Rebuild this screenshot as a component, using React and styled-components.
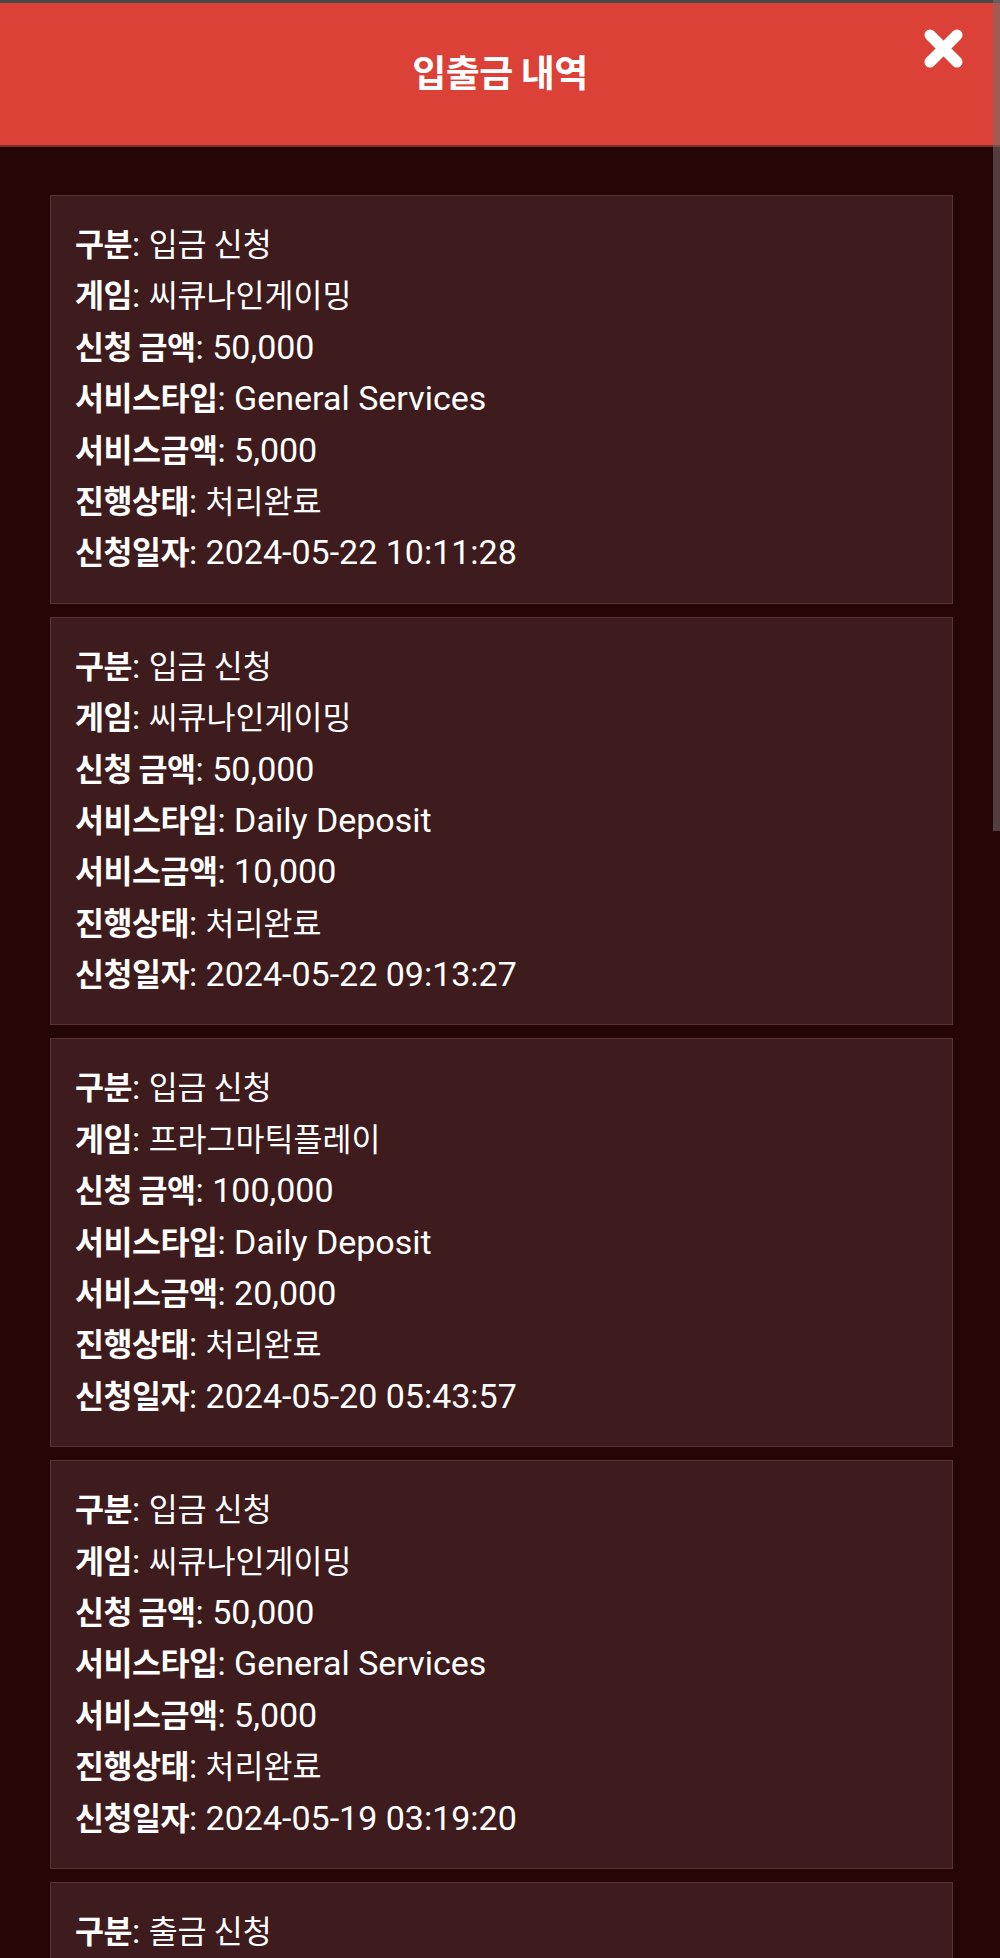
import styled, { createGlobalStyle } from 'styled-components';

const GlobalStyle = createGlobalStyle`
  html, body {
    margin: 0;
    padding: 0;
    background: #250605;
  }
  * {
    box-sizing: border-box;
  }
`;

const Page = styled.div`
  position: relative;
  height: 1958px;
  overflow: hidden;
  background: #250605;
  font-family: Roboto, "Noto Sans CJK KR", sans-serif;
  color: #ffffff;
`;

const Header = styled.header`
  position: relative;
  height: 147px;
  border-top: 3px solid #48474c;
  border-bottom: 2px solid #7a2c27;
  background: #db4136;
  display: flex;
  align-items: center;
  justify-content: center;
  padding-bottom: 6px;
`;

const Title = styled.h1`
  margin: 0;
  font-family: "Noto Sans CJK KR", sans-serif;
  font-size: 37px;
  font-weight: 700;
  letter-spacing: -0.5px;
`;

const CloseButton = styled.button`
  position: absolute;
  top: 25px;
  right: 36px;
  width: 41px;
  height: 41px;
  padding: 0;
  border: 0;
  background: none;
  cursor: pointer;
  display: flex;
`;

const Scrollbar = styled.div`
  position: absolute;
  top: 0;
  right: 0;
  width: 7px;
  height: 831px;
  background: rgba(120, 110, 110, 0.55);
`;

const List = styled.div`
  display: flex;
  flex-direction: column;
  gap: 13px;
  padding: 48px 47px 0 50px;
`;

const Card = styled.div`
  background: #3e1b1c;
  border: 1px solid #5b3233;
  padding: 21px 25px 26px 24px;
`;

const Row = styled.div`
  height: 51.4px;
  line-height: 51.4px;
  font-size: 34px;
  white-space: nowrap;
`;

const Label = styled.strong`
  font-family: "Noto Sans CJK KR", sans-serif;
  font-size: 31.5px;
  font-weight: 700;
  letter-spacing: -0.5px;
`;

const Value = styled.span`
  font-family: ${(p) => (p.$ko ? '"Noto Sans CJK KR", sans-serif' : 'Roboto, sans-serif')};
  font-size: ${(p) => (p.$ko ? '31.5px' : '34px')};
  font-weight: 400;
`;

const records = [
  { type: '입금 신청', game: '씨큐나인게이밍', amount: '50,000', service: 'General Services', bonus: '5,000', status: '처리완료', date: '2024-05-22 10:11:28' },
  { type: '입금 신청', game: '씨큐나인게이밍', amount: '50,000', service: 'Daily Deposit', bonus: '10,000', status: '처리완료', date: '2024-05-22 09:13:27' },
  { type: '입금 신청', game: '프라그마틱플레이', amount: '100,000', service: 'Daily Deposit', bonus: '20,000', status: '처리완료', date: '2024-05-20 05:43:57' },
  { type: '입금 신청', game: '씨큐나인게이밍', amount: '50,000', service: 'General Services', bonus: '5,000', status: '처리완료', date: '2024-05-19 03:19:20' },
  // rest of this one is below the fold
  { type: '출금 신청' },
];

const fields = [
  ['구분', 'type'],
  ['게임', 'game'],
  ['신청 금액', 'amount'],
  ['서비스타입', 'service'],
  ['서비스금액', 'bonus'],
  ['진행상태', 'status'],
  ['신청일자', 'date'],
];

const isKorean = (text) => /[가-힣]/.test(text);

const CloseIcon = () => (
  <svg width="41" height="41" viewBox="0 0 41 41">
    <path d="M7 7 L34 34 M34 7 L7 34" stroke="#ffffff" strokeWidth="11" strokeLinecap="round" />
  </svg>
);

const App = () => {
  return (
    <Page>
      <GlobalStyle />
      <Header>
        <Title>입출금 내역</Title>
        <CloseButton aria-label="닫기">
          <CloseIcon />
        </CloseButton>
      </Header>
      <List>
        {records.map((rec, i) => (
          <Card key={i}>
            {fields
              .filter(([, key]) => rec[key] !== undefined)
              .map(([label, key]) => (
                <Row key={key}>
                  <Label>{label}</Label>: <Value $ko={isKorean(rec[key])}>{rec[key]}</Value>
                </Row>
              ))}
          </Card>
        ))}
      </List>
      <Scrollbar />
    </Page>
  );
};

export default App;
